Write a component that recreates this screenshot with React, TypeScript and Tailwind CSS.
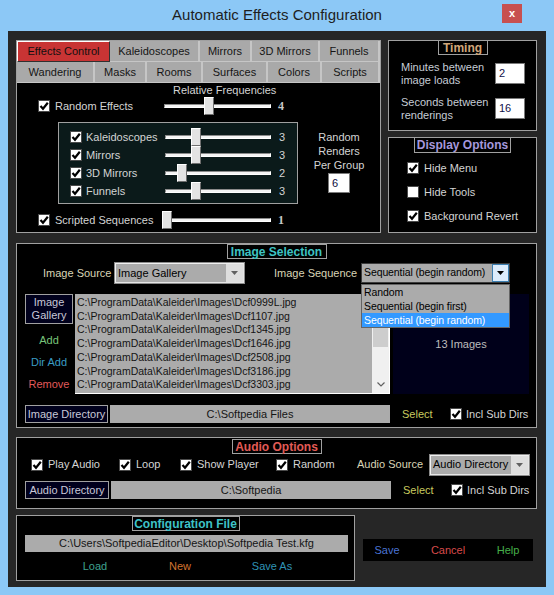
import type { ReactNode } from 'react';

const FONT = "font-['Liberation_Sans',Arial,sans-serif]";

function Check({ on = true }: { on?: boolean }) {
  return (
    <span className="flex h-[12px] w-[12px] shrink-0 items-center justify-center border border-[#4a4a4a] bg-white">
      {on && (
        <svg width="10" height="10" viewBox="0 0 10 10">
          <path d="M1.5 5l2.5 2.8L8.8 1.8" fill="none" stroke="#000" strokeWidth="2.2" />
        </svg>
      )}
    </span>
  );
}

function Slider({ pos, w = 106 }: { pos: number; w?: number }) {
  return (
    <div className="relative h-[18px] shrink-0" style={{ width: w }}>
      <div className="absolute left-0 right-0 top-[7px] h-[4px] border-t border-l border-[#8a8a8a] border-b border-r border-b-white border-r-white bg-[#f4f4f4]" />
      <div
        className="absolute top-0 h-[18px] w-[10px] border border-t-white border-l-white border-b-[#6e6e6e] border-r-[#6e6e6e] bg-[#e3e3e3]"
        style={{ left: pos }}
      />
    </div>
  );
}

function TitleBox({ text, color, w }: { text: string; color: string; w: string }) {
  return (
    <div className={`mx-auto flex h-[15px] items-center justify-center border border-[#a0a0a0] text-[12px] font-bold leading-none ${color} ${w}`}>
      {text}
    </div>
  );
}

function Combo({ text, w, focused = false, small = false }: { text: string; w: string; focused?: boolean; small?: boolean }) {
  return (
    <div
      className={`flex h-[20px] shrink-0 items-stretch border ${
        focused ? 'border-[#3c3c3c]' : 'border-t-[#f0f0f0] border-l-[#f0f0f0] border-b-[#e6e6e6] border-r-[#e6e6e6] outline outline-[#8c8c8c]'
      } bg-[#ababab] ${w}`}
    >
      <span
        className={`flex flex-1 items-center overflow-hidden whitespace-nowrap pl-[2px] text-black ${
          small ? 'text-[10.5px] tracking-[-0.1px]' : 'text-[11px]'
        }`}
      >
        {text}
      </span>
      <span
        className={`flex w-[17px] shrink-0 items-center justify-center ${
          focused ? 'border border-[#3c7fb1] bg-[#dcecfc]' : 'bg-[#dedede]'
        }`}
      >
        <svg width="7" height="4" viewBox="0 0 7 4">
          <path d="M0 0h7L3.5 4z" fill={focused ? '#000' : '#606060'} />
        </svg>
      </span>
    </div>
  );
}

function DarkBtn({ children, w, h }: { children: ReactNode; w: string; h: string }) {
  return (
    <div className={`flex shrink-0 items-center justify-center border border-[#a0a0a0] bg-[#00001c] text-center text-[11px] leading-[13px] text-[#c8c8d8] ${w} ${h}`}>
      {children}
    </div>
  );
}

const TABS1 = [
  { label: 'Effects Control', w: 'w-[93px]', on: true },
  { label: 'Kaleidoscopes', w: 'w-[90px]' },
  { label: 'Mirrors', w: 'w-[52px]' },
  { label: '3D Mirrors', w: 'w-[68px]' },
  { label: 'Funnels', w: 'flex-1' },
];
const TABS2 = [
  { label: 'Wandering', w: 'w-[78px]' },
  { label: 'Masks', w: 'w-[52px]' },
  { label: 'Rooms', w: 'w-[56px]' },
  { label: 'Surfaces', w: 'w-[65px]' },
  { label: 'Colors', w: 'w-[54px]' },
  { label: 'Scripts', w: 'flex-1' },
];

const GROUPS = [
  { label: 'Kaleidoscopes', pos: 26, value: 3 },
  { label: 'Mirrors', pos: 26, value: 3 },
  { label: '3D Mirrors', pos: 12, value: 2 },
  { label: 'Funnels', pos: 26, value: 3 },
];

const FILES = ['Dcf0999L', 'Dcf1107', 'Dcf1345', 'Dcf1646', 'Dcf2508', 'Dcf3186', 'Dcf3303'];

function Tab({ label, w, on }: { label: string; w: string; on?: boolean }) {
  return (
    <div
      className={`flex h-[21px] items-center justify-center whitespace-nowrap text-[11px] ${w} ${
        on
          ? 'border border-t-white border-l-white border-b-[#303030] border-r-[#303030] bg-[#c83434] text-[#101010]'
          : 'border-r-2 border-b border-[#c6c6c6] bg-[#a9a9a9] text-[#151515]'
      }`}
    >
      {label}
    </div>
  );
}

function EffectsPanel() {
  return (
    <div className="flex h-[193px] w-[365px] flex-col border border-[#a0a0a0] bg-black">
      <div className="flex">
        {TABS1.map((t) => (
          <Tab key={t.label} {...t} />
        ))}
      </div>
      <div className="flex">
        {TABS2.map((t) => (
          <Tab key={t.label} {...t} />
        ))}
      </div>
      <div className="flex-1 text-[11px] text-[#d4d4d4]">
        <div className="h-[14px] pl-[156px] leading-[14px]">Relative Frequencies</div>
        <div className="flex h-[18px] items-center pl-[21px]">
          <Check />
          <span className="ml-[5px] w-[109px]">Random Effects</span>
          <Slider pos={40} w={107} />
          <span className="ml-[7px] font-['Liberation_Serif',serif] text-[12px] font-bold text-[#c8c8c8]">4</span>
        </div>
        <div className="mt-[7px] ml-[41px] flex">
          <div className="h-[82px] w-[240px] border border-[#a0a0a0] bg-[#0b1a1a] pt-[5px] pl-[11px]">
            {GROUPS.map((g) => (
              <div key={g.label} className="flex h-[18px] items-center">
                <Check />
                <span className="ml-[4px] w-[79px]">{g.label}</span>
                <Slider pos={g.pos} />
                <span className="ml-[8px]">{g.value}</span>
              </div>
            ))}
          </div>
          <div className="flex w-[82px] flex-col items-center pt-[8px] leading-[14px]">
            <span>Random</span>
            <span>Renders</span>
            <span>Per Group</span>
            <div className="mt-[1px] flex h-[20px] w-[22px] items-center border border-[#7a7a7a] bg-white pl-[3px] text-[#0b0b40]">6</div>
          </div>
        </div>
        <div className="mt-[7px] flex h-[18px] items-center pl-[21px]">
          <Check />
          <span className="ml-[5px] w-[109px]">Scripted Sequences</span>
          <Slider pos={-2} w={107} />
          <span className="ml-[7px] font-['Liberation_Serif',serif] text-[12px] font-bold text-[#c8c8c8]">1</span>
        </div>
      </div>
    </div>
  );
}

function TimingPanel() {
  const rows = [
    { a: 'Minutes between', b: 'image loads', v: '2' },
    { a: 'Seconds between', b: 'renderings', v: '16' },
  ];
  return (
    <div className="h-[91px] w-[149px] border border-[#a0a0a0] bg-black">
      <div className="-mt-px">
        <TitleBox text="Timing" color="text-[#d2a77a]" w="w-[50px]" />
      </div>
      <div className="mt-[8px] flex flex-col gap-[14px] pl-[12px]">
        {rows.map((r) => (
          <div key={r.a} className="flex h-[21px] items-center">
            <div className="w-[94px] text-[11px] leading-[13px] text-[#c6ccd6]">
              <div>{r.a}</div>
              <div>{r.b}</div>
            </div>
            <div className="flex h-[21px] w-[30px] items-center border border-[#7a7a7a] bg-white pl-[3px] text-[11px] text-[#10104a]">
              {r.v}
            </div>
          </div>
        ))}
      </div>
    </div>
  );
}

function DisplayPanel() {
  const rows = [
    { label: 'Hide Menu', on: true },
    { label: 'Hide Tools', on: false },
    { label: 'Background Revert', on: true },
  ];
  return (
    <div className="h-[96px] w-[149px] border border-[#a0a0a0] bg-black">
      <div className="-mt-px">
        <TitleBox text="Display Options" color="text-[#a698dc]" w="w-[97px] h-[16px]" />
      </div>
      <div className="mt-[6px] flex flex-col gap-[6px] pl-[18px]">
        {rows.map((r) => (
          <div key={r.label} className="flex h-[18px] items-center text-[11px] text-[#d4d4d4]">
            <Check on={r.on} />
            <span className="ml-[5px]">{r.label}</span>
          </div>
        ))}
      </div>
    </div>
  );
}

function DirRow({ label, btnW, path }: { label: string; btnW: string; path: string }) {
  return (
    <div className="flex h-[18px] items-center pl-[8px] text-[11px]">
      <DarkBtn w={btnW} h="h-[18px]">
        {label}
      </DarkBtn>
      <div className="ml-[2px] flex h-[18px] w-[280px] items-center justify-center bg-[#ababab] text-[#151515]">{path}</div>
      <span className="ml-[12px] w-[48px] text-[#c9c95e]">Select</span>
      <Check />
      <span className="ml-[4px] text-[#d4d4d4]">Incl Sub Dirs</span>
    </div>
  );
}

function ImagePanel() {
  return (
    <div className="mt-[10px] h-[185px] w-[521px] border border-[#a0a0a0] bg-black">
      <TitleBox text="Image Selection" color="text-[#3ec3c3]" w="w-[100px]" />
      <div className="mt-[4px] flex h-[20px] items-center pl-[26px] text-[11px] text-[#d9d4b5]">
        <span className="w-[72px]">Image Source</span>
        <Combo text="Image Gallery" w="w-[129px]" />
        <span className="ml-[30px] w-[87px]">Image Sequence</span>
        <div className="relative">
          <Combo text="Sequential (begin random)" w="w-[149px]" focused small />
          <div className="absolute left-0 top-[21px] z-10 w-[149px] border border-[#646464] bg-[#ababab] text-[10.5px] leading-[14px] tracking-[-0.1px] text-black">
            <div className="pl-[2px]">Random</div>
            <div className="pl-[2px]">Sequential (begin first)</div>
            <div className="bg-[#3399ff] pl-[2px] text-white">Sequential (begin random)</div>
          </div>
        </div>
      </div>
      <div className="mt-[11px] flex pl-[8px]">
        <div className="flex w-[48px] flex-col items-center text-[11px]">
          <DarkBtn w="w-[48px]" h="h-[30px]">
            <div>
              Image
              <br />
              Gallery
            </div>
          </DarkBtn>
          <div className="mt-[5px] flex h-[22px] items-center text-[#78c47a]">Add</div>
          <div className="flex h-[22px] items-center text-[#3a9cc4]">Dir Add</div>
          <div className="flex h-[22px] items-center text-[#e05a5a]">Remove</div>
        </div>
        <div className="ml-[2px] flex h-[100px] w-[315px] border-b border-r border-white bg-[#ababab]">
          <div className="flex-1 overflow-hidden whitespace-nowrap pt-[2px] pl-[2px] text-[10.5px] leading-[13.7px] text-[#141414]">
            {FILES.map((f) => (
              <div key={f}>{`C:\\ProgramData\\Kaleider\\Images\\${f}.jpg`}</div>
            ))}
          </div>
          <div className="flex w-[17px] flex-col bg-[#f0f0f0]">
            <div className="flex h-[17px] items-center justify-center">
              <svg width="8" height="5" viewBox="0 0 8 5">
                <path d="M0.5 4.5L4 1l3.5 3.5" fill="none" stroke="#606060" strokeWidth="1.2" />
              </svg>
            </div>
            <div className="mx-[1px] h-[36px] bg-[#cdcdcd]" />
            <div className="flex-1" />
            <div className="flex h-[17px] items-center justify-center">
              <svg width="8" height="5" viewBox="0 0 8 5">
                <path d="M0.5 0.5L4 4l3.5-3.5" fill="none" stroke="#606060" strokeWidth="1.2" />
              </svg>
            </div>
          </div>
        </div>
        <div className="ml-[3px] flex h-[100px] w-[136px] items-center justify-center bg-[#00001a] text-[11px] text-[#bdbdbd]">
          13 Images
        </div>
      </div>
      <div className="mt-[10px]">
        <DirRow label="Image Directory" btnW="w-[83px]" path="C:\Softpedia Files" />
      </div>
    </div>
  );
}

function AudioPanel() {
  const items = [
    { label: 'Play Audio', w: 'w-[88px]' },
    { label: 'Loop', w: 'w-[61px]' },
    { label: 'Show Player', w: 'w-[96px]' },
    { label: 'Random', w: 'w-[81px]' },
  ];
  return (
    <div className="mt-[9px] h-[72px] w-[521px] border border-[#a0a0a0] bg-black">
      <div className="mt-[1px]">
        <TitleBox text="Audio Options" color="text-[#e25b56]" w="w-[90px]" />
      </div>
      <div className="flex h-[21px] items-center pl-[14px] text-[11px] text-[#d4d4d4]">
        {items.map((it) => (
          <div key={it.label} className={`flex items-center ${it.w}`}>
            <Check />
            <span className="ml-[5px]">{it.label}</span>
          </div>
        ))}
        <span className="w-[73px] text-[#d9d4b5]">Audio Source</span>
        <Combo text="Audio Directory" w="w-[99px]" />
      </div>
      <div className="mt-[6px]">
        <DirRow label="Audio Directory" btnW="w-[84px]" path="C:\Softpedia" />
      </div>
    </div>
  );
}

function ConfigPanel() {
  return (
    <div className="h-[66px] w-[339px] border border-[#a0a0a0] bg-black">
      <TitleBox text="Configuration File" color="text-[#3ec3c8]" w="w-[108px]" />
      <div className="mt-[4px] ml-[8px] flex h-[17px] w-[323px] items-center justify-center bg-[#ababab] text-[11px] text-[#151515]">
        C:\Users\SoftpediaEditor\Desktop\Softpedia Test.kfg
      </div>
      <div className="mt-[6px] flex h-[17px] items-center text-[11px]">
        <span className="ml-[48px] w-[60px] text-center text-[#3fa08f]">Load</span>
        <span className="ml-[25px] w-[60px] text-center text-[#d2732f]">New</span>
        <span className="ml-[32px] w-[60px] text-center text-[#2f93b5]">Save As</span>
      </div>
    </div>
  );
}

export default function App() {
  return (
    <div className={`flex h-[595px] w-[554px] flex-col bg-[#8cc8f6] ${FONT}`}>
      <div className="relative flex h-[31px] items-center justify-center pb-px text-[15px] text-[#1e1e1e]">
        Automatic Effects Configuration
        <div className="absolute right-[32px] top-[4px] flex h-[19px] w-[20px] items-center justify-center bg-[#c75050] text-[11px] font-bold text-white">
          x
        </div>
      </div>
      <div className="mx-[8px] h-[556px] bg-[#262626] pt-[9px] pl-[8px]">
        <div className="flex gap-[7px]">
          <EffectsPanel />
          <div className="flex flex-col gap-[6px]">
            <TimingPanel />
            <DisplayPanel />
          </div>
        </div>
        <ImagePanel />
        <AudioPanel />
        <div className="mt-[6px] flex">
          <ConfigPanel />
          <div className="mt-[24px] ml-[8px] flex h-[22px] w-[170px] items-center bg-black text-[11px]">
            <span className="ml-[4px] w-[40px] text-center text-[#4a74d4]">Save</span>
            <span className="ml-[21px] w-[40px] text-center text-[#d84a4a]">Cancel</span>
            <span className="ml-[20px] w-[40px] text-center text-[#46b04a]">Help</span>
          </div>
        </div>
      </div>
    </div>
  );
}
